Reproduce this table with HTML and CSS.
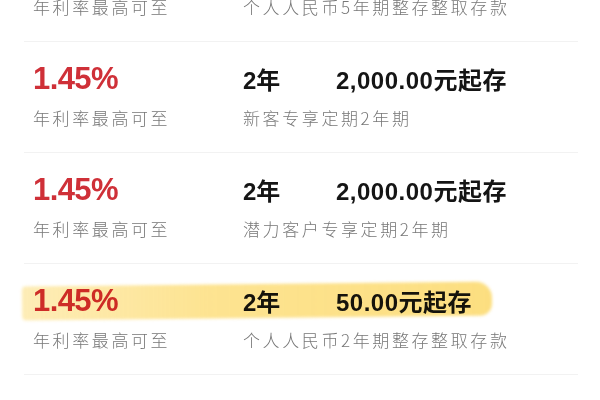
FILE: index.html
```html
<!DOCTYPE html>
<html lang="zh-CN">
<head>
<meta charset="utf-8">
<title>定期存款</title>
<link rel="stylesheet" href="styles.css">
</head>
<body>
<ul class="list">
  <li class="row">
    <div class="main">
      <span class="rate">1.45%</span>
      <span class="term">5年</span>
      <span class="min">50.00元起存</span>
    </div>
    <div class="sub">
      <span class="note">年利率最高可至</span>
      <span class="desc">个人人民币5年期整存整取存款</span>
    </div>
  </li>
  <li class="row">
    <div class="main">
      <span class="rate">1.45%</span>
      <span class="term">2年</span>
      <span class="min">2,000.00元起存</span>
    </div>
    <div class="sub">
      <span class="note">年利率最高可至</span>
      <span class="desc">新客专享定期2年期</span>
    </div>
  </li>
  <li class="row">
    <div class="main">
      <span class="rate">1.45%</span>
      <span class="term">2年</span>
      <span class="min">2,000.00元起存</span>
    </div>
    <div class="sub">
      <span class="note">年利率最高可至</span>
      <span class="desc">潜力客户专享定期2年期</span>
    </div>
  </li>
  <li class="row">
    <div class="main marked">
      <span class="rate">1.45%</span>
      <span class="term">2年</span>
      <span class="min">50.00元起存</span>
    </div>
    <div class="sub">
      <span class="note">年利率最高可至</span>
      <span class="desc">个人人民币2年期整存整取存款</span>
    </div>
  </li>
  <li class="row">
    <div class="main">
      <span class="rate">1.45%</span>
      <span class="term">2年</span>
      <span class="min">50.00元起存</span>
    </div>
    <div class="sub">
      <span class="note">年利率最高可至</span>
      <span class="desc">个人人民币2年期整存整取存款</span>
    </div>
  </li>
</ul>
</body>
</html>
```

FILE: styles.css
```css
html, body {
  margin: 0;
  padding: 0;
  background: #ffffff;
  overflow: hidden;
}

body {
  width: 600px;
  height: 400px;
  font-family: "Liberation Sans", "Noto Sans CJK SC", sans-serif;
}

.list {
  list-style: none;
  margin: 0;
  padding: 0;
  margin-top: -70px;
}

.row {
  height: 111px;
  box-sizing: border-box;
  margin: 0 22px 0 24px;
  padding: 19px 0 0 9px;
  border-top: 1px solid #f2f2f2;
}

.row:first-child {
  border-top-color: transparent;
}

.main,
.sub {
  display: grid;
  grid-template-columns: 210px 93px auto;
  align-items: baseline;
}

.main {
  height: 36px;
  position: relative;
}

.sub {
  grid-template-columns: 210px auto;
  margin-top: 9px;
}

.rate {
  font-size: 31px;
  line-height: 36px;
  font-weight: 700;
  color: #cf3038;
  letter-spacing: -0.6px;
}

.term,
.min {
  font-family: "Liberation Sans", "Noto Sans CJK SC", sans-serif;
  font-size: 24px;
  line-height: 36px;
  font-weight: 700;
  color: #151515;
}

.min {
  letter-spacing: 0.5px;
}

.note,
.desc {
  font-family: "Noto Sans CJK SC", sans-serif;
  font-weight: 300;
  font-size: 17px;
  line-height: 24px;
  color: #777777;
  letter-spacing: 2.6px;
}

/* marker highlight laid over the row */
.marked::before {
  content: "";
  position: absolute;
  left: -11px;
  top: 1px;
  width: 470px;
  height: 34px;
  background: linear-gradient(90deg, rgba(252, 218, 110, 0.5) 0%, rgba(252, 214, 92, 0.68) 40%, rgba(251, 212, 88, 0.76) 100%);
  border-radius: 4px 16px 12px 4px;
  transform: rotate(-0.6deg);
  filter: blur(1.5px);
  mix-blend-mode: multiply;
  pointer-events: none;
}
```
